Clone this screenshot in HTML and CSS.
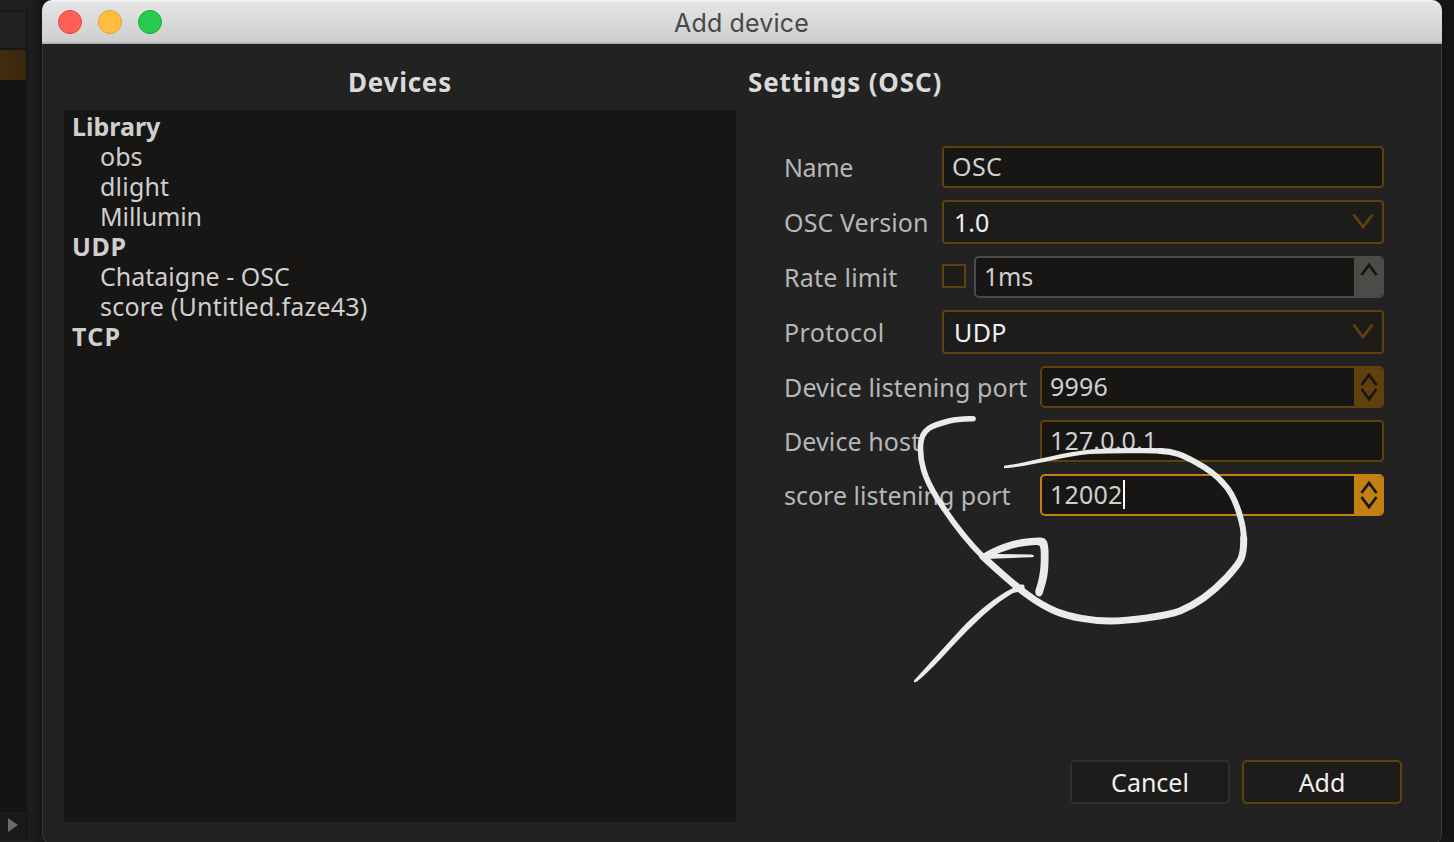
FILE: index.html
```html
<!DOCTYPE html>
<html lang="en">
<head>
<meta charset="utf-8">
<title>Add device</title>
<link rel="stylesheet" href="styles.css">
</head>
<body>
<div class="desktop">
  <aside class="backdrop-panel">
    <div class="backdrop-head"></div>
    <div class="backdrop-row"></div>
    <div class="backdrop-body"></div>
    <div class="backdrop-foot"><svg width="10" height="14" viewBox="0 0 10 14"><path d="M0 0L10 7L0 14Z"/></svg></div>
  </aside>
  <main class="dialog">
    <header class="titlebar">
      <div class="lights"><i class="light close"></i><i class="light minimize"></i><i class="light zoom"></i></div>
      <span class="title">Add device</span>
    </header>
    <div class="content">
      <section class="devices">
        <h2 class="heading"><span class="t-devices">Devices</span></h2>
        <div class="tree">
          <div class="group"><span class="t-library">Library</span></div>
          <div class="item"><span class="t-obs">obs</span></div>
          <div class="item"><span class="t-dlight">dlight</span></div>
          <div class="item"><span class="t-millumin">Millumin</span></div>
          <div class="group"><span class="t-gudp">UDP</span></div>
          <div class="item"><span class="t-chataigne">Chataigne - OSC</span></div>
          <div class="item"><span class="t-score">score (Untitled.faze43)</span></div>
          <div class="group"><span class="t-tcp">TCP</span></div>
        </div>
      </section>
      <section class="settings">
        <h2 class="heading"><span class="t-settings">Settings (OSC)</span></h2>
        <div class="form">
          <div class="row"><label class="label"><span class="t-name">Name</span></label><div class="field"><span class="t-osc">OSC</span></div></div>
          <div class="row"><label class="label"><span class="t-version">OSC Version</span></label><div class="field combo"><span class="t-one">1.0</span><svg class="chevron" width="22" height="16" viewBox="0 0 22 16"><path d="M1.5 1.5L11 14L20.5 1.5"/></svg></div></div>
          <div class="row rate"><label class="label"><span class="t-rate">Rate limit</span></label><div class="check"></div><div class="field spin muted"><span class="t-ms">1ms</span><div class="steps"><svg width="18" height="28" viewBox="0 0 18 28"><path d="M1.5 12L9 2L16.5 12"/></svg></div></div></div>
          <div class="row"><label class="label"><span class="t-protocol">Protocol</span></label><div class="field combo"><span class="t-udp">UDP</span><svg class="chevron" width="22" height="16" viewBox="0 0 22 16"><path d="M1.5 1.5L11 14L20.5 1.5"/></svg></div></div>
          <div class="row wide"><label class="label"><span class="t-dport">Device listening port</span></label><div class="field spin"><span class="t-num">9996</span><div class="steps"><svg width="18" height="28" viewBox="0 0 18 28"><path d="M1.5 12L9 2L16.5 12M1.5 16L9 26L16.5 16"/></svg></div></div></div>
          <div class="row wide"><label class="label"><span class="t-host">Device host</span></label><div class="field"><span class="t-ip">127.0.0.1</span></div></div>
          <div class="row wide"><label class="label"><span class="t-sport">score listening port</span></label><div class="field spin focus"><span class="t-num">12002</span><i class="caret"></i><div class="steps"><svg width="18" height="28" viewBox="0 0 18 28"><path d="M1.5 12L9 2L16.5 12M1.5 16L9 26L16.5 16"/></svg></div></div></div>
        </div>
        <div class="actions">
          <button class="button"><span class="t-cancel">Cancel</span></button>
          <button class="button primary"><span class="t-add">Add</span></button>
        </div>
      </section>
    </div>
  </main>
  <svg class="ink" width="1454" height="842" viewBox="0 0 1454 842">
    <path class="fill" d="M1004 465.8C1025 463.5 1060 452.5 1090 449.5C1115 447.8 1140 447.8 1164 448.2L1163 453.8C1140 453.2 1115 453 1090 454C1062 456.5 1026 467.5 1004 468.2Z"/>
    <path d="M1160 451C1173 451 1183 455 1197 463C1208 469 1217 476 1223 483C1232 492 1237 505 1240 516C1243 526 1244 533 1243.7 540" stroke-width="6"/>
    <path d="M1243.7 538C1244 560 1240 562 1226.7 577.5C1213 592 1197 604 1180 611C1166 616 1130 621 1110 621C1092 621 1070 617 1056.7 611.7C1037 604 1019 590 983 556.7" stroke-width="7"/>
    <path d="M983 556.7C966 540 951 520 937 498C924 477 920 462 920.5 446C921 428 933 425 950 420.7C958 419 965 419 973 418.7" stroke-width="5.6"/>
    <path class="fill" d="M981 555C1000 543 1021 537.5 1040 537.5C1046 537.5 1048 541 1048.5 550C1049 574 1047 580 1042.5 594C1040 599 1034 596 1035.5 590C1040 577 1041 568 1040.7 552C1040.5 545.5 1040 545 1035 545C1019 546 1008 549 997 554L1031 554.5C1035 555 1035 557 1031 557.3L985 559Z"/>
    <path class="fill" d="M1024 585C1020 583.5 1016 586.5 1013 588C995 597 978 611 960 630L914 680.5C913.5 682.5 915 682.5 917 681.5C933 669 949 649 967 631C982 616 996 603 1013 593L1022 591C1025 589 1025 587 1024 585Z"/>
  </svg>
</div>
</body>
</html>
```

FILE: styles.css
```css
* { box-sizing: border-box; }
body { margin: 0; overflow: hidden; background: #1c1c1c; font: 25px/30px "Noto Sans", sans-serif; color: #cfcfcf; }
.desktop { position: relative; display: flex; width: 1454px; height: 842px; background: linear-gradient(90deg, #1e1e1e 28px, #1a1a1a 42px, #171615 1442px, #161615 1454px); }
.backdrop-panel { width: 28px; margin: 10px 14px 2px 0; padding: 2px 2px 0 0; background: #171717; display: flex; flex-direction: column; }
.backdrop-head { height: 36px; background: #212121; margin-bottom: 2px; }
.backdrop-row { height: 30px; background: linear-gradient(90deg, #422d0e, #38260d); }
.backdrop-body { flex: 1; background: #141412; }
.backdrop-foot { height: 26px; margin-bottom: 2px; padding-left: 8px; background: #1a1918; border: 1px solid #1e1d1b; border-left: 0; display: flex; align-items: center; }
.dialog { width: 1400px; height: 844px; background: #222; border-radius: 10px 10px 9px 9px; box-shadow: inset 0 0 0 1px #383838, 0 0 10px #0005; overflow: hidden; display: flex; flex-direction: column; }
.titlebar { flex-shrink: 0; display: grid; grid-template-columns: 1fr auto 1fr; align-items: center; height: 44px; background: linear-gradient(#f5f5f5, #e4e4e4 3px, #cecece 42px, #b0b0b0 43px); color: #484848; }
.lights { display: flex; gap: 16px; padding-left: 16px; }
.light { width: 24px; height: 24px; border-radius: 50%; border: 1px solid; }
.close { background: #ff5f57; border-color: #e24640; }
.minimize { background: #ffbd3e; border-color: #dfa033; }
.zoom { background: #28ca4b; border-color: #14ae34; }
.title { font: 25px/30px Inter, sans-serif; letter-spacing: .15px; margin: 2px 1px 0 0; }
.content { flex: 1; display: flex; gap: 12px; padding: 22px 40px 22px 22px; }
.devices { width: 672px; display: flex; flex-direction: column; }
.heading { margin: 0; height: 44px; font-size: 26px; line-height: 32px; font-weight: 700; color: #dadada; }
.devices .heading { text-align: center; }
.tree { height: 712px; padding: 1px 8px; background: #171614; }
.tree span { display: block; }
.group { font-weight: 700; }
.item { padding-left: 28px; }
.settings { flex: 1; display: flex; flex-direction: column; }
.form { display: flex; flex-direction: column; gap: 12px; width: 636px; padding: 36px 0 0 36px; }
.row { display: grid; grid-template-columns: 158px 1fr; align-items: center; }
.rate { grid-template-columns: 158px 24px 1fr; }
.rate .field { margin-left: 8px; }
.row.wide { grid-template-columns: 256px 1fr; }
.label { color: #b7b7b7; white-space: nowrap; }
.field { height: 42px; border: 2px solid #60400d; border-radius: 4px; background: #171614; display: flex; align-items: center; padding: 0 0 2px 8px; overflow: hidden; }
.combo { height: 44px; background: #1e1c1a; color: #f0f0f0; justify-content: space-between; padding: 0 8px 0 10px; }
.chevron { margin-top: -3px; }
svg path { fill: none; }
.chevron path { stroke: #60400d; stroke-width: 2.8; }
.check { width: 24px; height: 24px; border: 2px solid #60400d; background: #1e1c1a; margin-top: -2px; }
.spin { border-radius: 5px; }
.steps { width: 28px; height: 38px; margin: 0 0 -2px auto; padding-left: 2px; background: #60400d; display: grid; place-items: center; }
.steps path { stroke: #171614; stroke-width: 2.8; }
.muted { border-color: #4c4b47; }
.muted .steps { background: #4c4b47; }
.focus { border-color: #c58014; }
.focus .steps { background: #c58014; }
.caret { width: 2px; height: 29px; background: #fff; }
.actions { margin: auto 0 18px auto; display: flex; gap: 12px; }
.button { width: 160px; height: 44px; border: 2px solid #302f2d; border-radius: 5px; background: #1e1c1a; color: #f0f0f0; font: inherit; padding: 0; }
.primary { border-color: #60400d; }
.backdrop-foot path { fill: #6c6c6c; }
.ink { position: absolute; inset: 0; pointer-events: none; }
.ink path { stroke: #ebebeb; stroke-linecap: round; stroke-linejoin: round; }
.ink .fill { fill: #ebebeb; stroke: none; }

/* Tracking adjustments per label */
.t-devices { letter-spacing: .75px; }
.t-settings { letter-spacing: .82px; }
.t-gudp { letter-spacing: .6px; }
.t-tcp { letter-spacing: 1.2px; }
.t-millumin { letter-spacing: -.1px; }
.t-dlight { letter-spacing: .2px; }
.t-score { letter-spacing: .22px; }
.t-name { letter-spacing: -.4px; }
.t-version { letter-spacing: .1px; }
.t-rate { letter-spacing: .25px; }
.t-protocol { letter-spacing: .35px; }
.t-dport { letter-spacing: .13px; }
.t-host { letter-spacing: .1px; }
.t-osc { letter-spacing: .4px; }
.t-udp { letter-spacing: .4px; }
.t-num { letter-spacing: .2px; }
.t-ms { letter-spacing: -.2px; }
.t-ip { letter-spacing: .15px; }
```
